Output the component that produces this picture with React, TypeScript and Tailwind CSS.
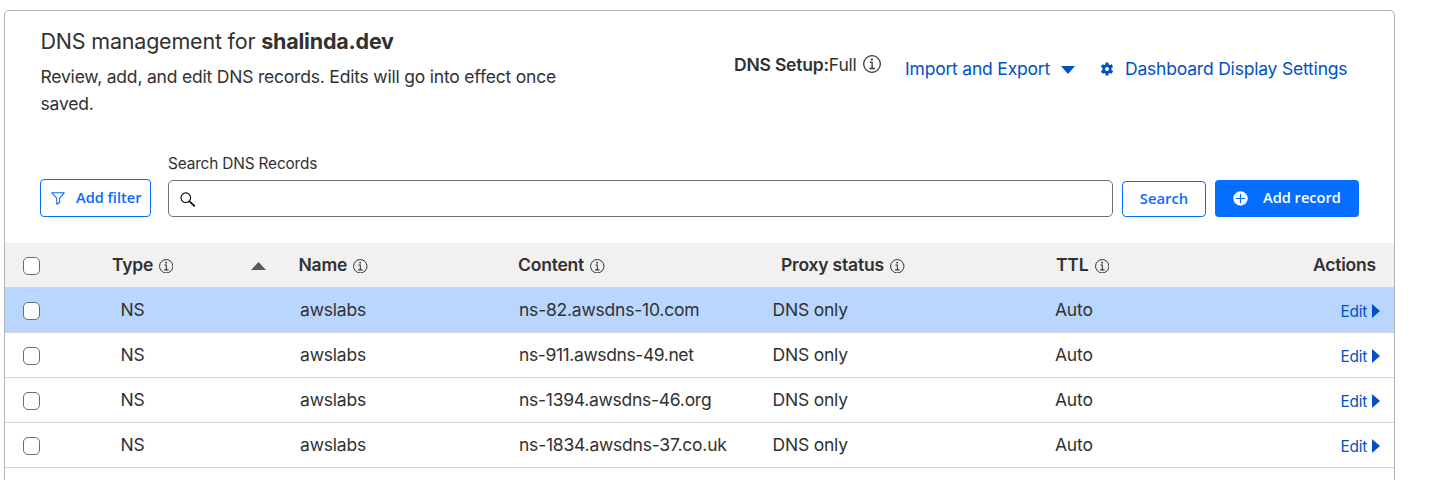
import React from 'react';

type IconProps = { className?: string };

const InfoIcon = ({ className = '' }: IconProps) => (
  <svg viewBox="0 0 16 16" className={`shrink-0 ${className}`} fill="none" stroke="currentColor">
    <circle cx="8" cy="8" r="7.4" strokeWidth="1.1" />
    <path d="M6 6.6h2.1v5.2M5.7 12h4.8" strokeWidth="1.15" />
    <circle cx="7.9" cy="4.1" r="0.95" fill="currentColor" stroke="none" />
  </svg>
);

const GearIcon = ({ className = '' }: IconProps) => (
  <svg viewBox="0 0 14 14" className={`shrink-0 ${className}`} fill="currentColor">
    <path
      fillRule="evenodd"
      d="M5.600.4h2.800l.3 2 1 .6 1.900-.8 1.500 2.500-1.600 1.200v2.200l1.600 1.200-1.500 2.500-1.900-.8-1 .6-.3 2H5.600l-.3-2-1-.6-1.900.8L.9 9.300l1.600-1.200V5.900L.9 4.700l1.500-2.500 1.900.8 1-.6zM7 5a2 2 0 1 0 0 4 2 2 0 0 0 0-4z"
    />
  </svg>
);

const FunnelIcon = ({ className = '' }: IconProps) => (
  <svg viewBox="0 0 14 13" className={`shrink-0 ${className}`} fill="none" stroke="currentColor" strokeWidth="1.1" strokeLinejoin="round">
    <path d="M.8.8h12.400L8.600 6.200v4.300L5.800 12.300V6.200z" />
  </svg>
);

const SearchIcon = ({ className = '' }: IconProps) => (
  <svg viewBox="0 0 16 15" className={`shrink-0 ${className}`} fill="none" stroke="currentColor">
    <circle cx="5.800" cy="5.700" r="4.800" strokeWidth="1.100" />
    <path d="M9.200 9.200L14.800 14.300" strokeWidth="1.600" />
  </svg>
);

const PlusIcon = ({ className = '' }: IconProps) => (
  <svg viewBox="0 0 15 15" className={`shrink-0 ${className}`}>
    <circle cx="7.500" cy="7.500" r="7.200" fill="white" />
    <path d="M7.500 2.800v9.400M2.800 7.500h9.400" stroke="#056dff" strokeWidth="1.200" />
  </svg>
);

const columns = 'grid grid-cols-[95px_179px_219px_254px_283px_285px_1fr]';

const Checkbox = () => (
  <span className="ml-[18px] mt-[2px] block h-[18px] w-[17px] rounded-[5px] border border-[#6b6b6b] bg-white" />
);

const records = [
  { content: 'ns-82.awsdns-10.com', tracking: 'tracking-[-0.22px]', selected: true },
  { content: 'ns-911.awsdns-49.net', tracking: 'tracking-[-0.4px]', selected: false },
  { content: 'ns-1394.awsdns-46.org', tracking: 'tracking-[-0.27px]', selected: false },
  { content: 'ns-1834.awsdns-37.co.uk', tracking: 'tracking-[-0.22px]', selected: false },
];

export default function App() {
  return (
    <div className="h-[480px] overflow-hidden bg-white pt-[10px] pl-1 font-['Inter',sans-serif] text-[17.5px] leading-[27px] tracking-[-0.2px] text-[#313131]">
      <main className="h-[500px] w-[1391px] overflow-hidden rounded-[5px] border border-[#b2b2b2]">
        <header className="flex h-[136px] pl-[35px]">
          <div className="w-[540px] pt-[15px] pl-[0.5px]">
            <h1 className="text-[21.5px] leading-[31px]">
              DNS management for <strong className="font-bold">shalinda.dev</strong>
            </h1>
            <p className="mt-[6px]">Review, add, and edit DNS records. Edits will go into effect once saved.</p>
          </div>
          <div className="flex pt-[40px] pl-[154px] whitespace-nowrap">
            <div className="flex w-[171px] items-start">
              <strong className="font-semibold">DNS Setup:</strong>
              <span className="w-[28px]">Full</span>
              <InfoIcon className="mt-[4px] ml-[6px] size-[18px]" />
            </div>
            <a className="mt-[4px] flex w-[195px] text-[#0051c3]">
              Import and Export
              <svg viewBox="0 0 14 8" className="mt-[11px] ml-[11px] h-2 w-[14px]" fill="currentColor"><path d="M0 0h14L7 8z" /></svg>
            </a>
            <a className="mt-[4px] flex text-[#0051c3]">
              <GearIcon className="mt-[7px] mr-[11px] size-[14px]" />
              Dashboard Display Settings
            </a>
          </div>
        </header>

        <section className="flex h-[96px] pl-[35px]">
          <button className="mt-[32px] flex h-[38px] w-[111px] items-center rounded-[4px] border border-[#056dff] pl-[10px] font-['Open_Sans',sans-serif] text-[14.6px] font-semibold tracking-normal whitespace-nowrap text-[#056dff]">
            <FunnelIcon className="mr-[11px] h-[13px] w-[14px]" />
            <span className="pb-[2px]">Add filter</span>
          </button>
          <div className="ml-[17px] w-[945px]">
            <label className="block pt-[6px] text-[15.4px] leading-[22px] tracking-[-0.16px]">Search DNS Records</label>
            <div className="mt-[5px] flex h-[37px] items-center rounded-[5px] border border-[#707070] pt-px pl-[11px] text-black">
              <SearchIcon className="h-[15px] w-4" />
            </div>
          </div>
          <button className="mt-[34px] ml-[9px] h-[36px] w-[84px] rounded-[4px] border border-[#056dff] pb-[2px] font-['Open_Sans',sans-serif] text-[14.8px] font-semibold tracking-normal text-[#056dff]">
            Search
          </button>
          <button className="mt-[33px] ml-[9px] flex h-[37px] w-[144px] items-center rounded-[4px] bg-[#056dff] pl-[18px] font-['Open_Sans',sans-serif] text-[14.6px] font-semibold tracking-normal whitespace-nowrap text-white">
            <PlusIcon className="mr-[15px] size-[15px]" />
            <span className="pb-[2px]">Add record</span>
          </button>
        </section>

        <div role="table">
          <div role="row" className={`${columns} h-[45px] items-center border-b border-[#d5d5d5] bg-[#f1f1f1] font-semibold`}>
            <Checkbox />
            <span className="flex items-center pb-[2px] pl-3">
              <span className="w-[46.5px]">Type</span>
              <InfoIcon className="mt-[4px] size-[14.5px]" />
              <svg viewBox="0 0 15 8" className="mt-[4px] ml-[78px] h-2 w-[15px]" fill="#595959"><path d="M7.500 0L15 8H0z" /></svg>
            </span>
            <span className="flex items-center pb-[2px] pl-[19.5px]">Name <InfoIcon className="mt-[4px] ml-[6px] size-[14.5px]" /></span>
            <span className="flex items-center pb-[2px] pl-[20px]">Content <InfoIcon className="mt-[4px] ml-[6px] size-[14.5px]" /></span>
            <span className="flex items-center pb-[2px] pl-[29px]">Proxy status <InfoIcon className="mt-[4px] ml-[6.500px] size-[14.5px]" /></span>
            <span className="flex items-center pb-[2px] pl-[21px]">TTL <InfoIcon className="mt-[4px] ml-[6.500px] size-[14.5px]" /></span>
            <span className="-ml-[7px] pb-[2px]">Actions</span>
          </div>
          {records.map((record) => (
            <div key={record.content} role="row" className={`${columns} h-[45px] items-center border-b border-[#d5d5d5] ${record.selected ? 'bg-[#b9d6ff]' : 'bg-white'}`}>
              <Checkbox />
              <span className="pb-[2px] pl-[20.5px]">NS</span>
              <span className="pb-[2px] pl-[21px]">awslabs</span>
              <span className={`pb-[2px] pl-[21px] ${record.tracking}`}>{record.content}</span>
              <span className="pb-[2px] pl-[20.5px]">DNS only</span>
              <span className="pb-[2px] pl-[20px]">Auto</span>
              <a className="mt-[2px] flex items-center pl-[20.5px] text-[15.4px] text-[#0051c3]">
                <span className="w-[31.5px]">Edit</span>
                <svg viewBox="0 0 8 14" className="h-[14px] w-2" fill="currentColor"><path d="M0 0l8 7-8 7z" /></svg>
              </a>
            </div>
          ))}
        </div>
      </main>
    </div>
  );
}
